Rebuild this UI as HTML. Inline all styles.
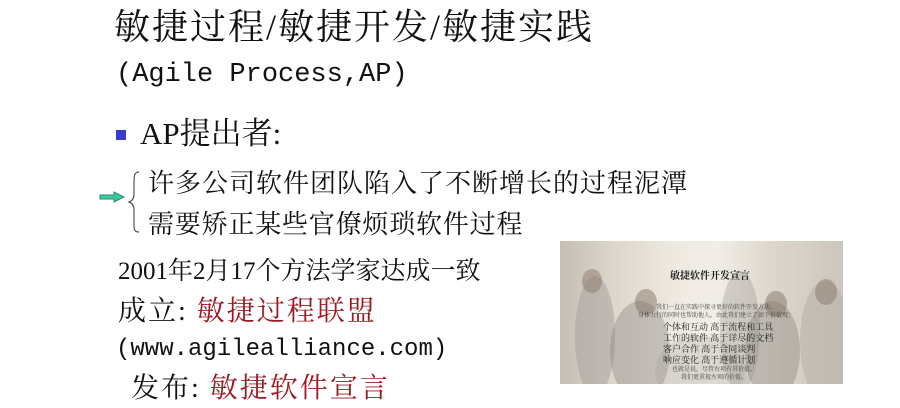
<!DOCTYPE html>
<html><head><meta charset="utf-8"><style>
body{margin:0;width:900px;height:408px;background:#fff;position:relative;overflow:hidden;font-family:"Liberation Serif","Noto Serif CJK SC",serif;color:#111}
.a{position:absolute;white-space:nowrap;line-height:1}
.r{color:#9b1b22}
.m{font-family:"Liberation Mono","Noto Serif CJK SC",monospace}
.b{position:absolute;border-radius:50%}
</style></head><body>
<div class="a" style="left:114px;top:9px;font-size:36px;letter-spacing:2px">敏捷过程/敏捷开发/敏捷实践</div>
<div class="a m" style="left:116px;top:62px;font-size:27px;">(Agile Process,AP)</div>
<div class="a" style="left:116px;top:130px;width:10px;height:10px;background:#3a3ad0"></div>
<div class="a" style="left:140px;top:118px;font-size:31px;">AP提出者:</div>
<svg class="a" style="left:98px;top:190px" width="30" height="14"><path d="M2 5h14V2l10 5-10 5V9H2z" fill="#3cc9a0" stroke="#2a8a6a" stroke-width="1"/></svg>
<svg class="a" style="left:128px;top:170px" width="14" height="64"><path d="M11 2C6 2 6 6 6 14v10c0 5-2 7-5 8 3 1 5 3 5 8v12c0 8 0 10 5 10" fill="none" stroke="#555" stroke-width="1.2"/></svg>
<div class="a" style="left:148px;top:171px;font-size:26px;letter-spacing:1px">许多公司软件团队陷入了不断增长的过程泥潭</div>
<div class="a" style="left:148px;top:212px;font-size:26px;letter-spacing:0.8px">需要矫正某些官僚烦琐软件过程</div>
<div class="a" style="left:118px;top:259px;font-size:25px;">2001年2月17个方法学家达成一致</div>
<div class="a" style="left:118px;top:298px;font-size:28px;letter-spacing:2px">成立: <span class="r">敏捷过程联盟</span></div>
<div class="a m" style="left:116px;top:338px;font-size:24px;">(www.agilealliance.com)</div>
<div class="a" style="left:131px;top:375px;font-size:28px;letter-spacing:2px">发布: <span class="r">敏捷软件宣言</span></div>
<div class="a" style="left:560px;top:241px;width:283px;height:143px;background:linear-gradient(90deg,#c4beb4 0%,#ddd7cd 20%,#eee9e0 40%,#f2eee7 55%,#dcd6cc 75%,#cdc6bc 100%);overflow:hidden">
<div class="b" style="left:15px;top:35px;width:40px;height:120px;background:#a09a96;opacity:.45"></div>
<div class="b" style="left:22px;top:28px;width:20px;height:24px;background:#8a7a6a;opacity:.5"></div>
<div class="b" style="left:50px;top:60px;width:60px;height:100px;background:#8a8582;opacity:.4"></div>
<div class="b" style="left:75px;top:48px;width:22px;height:26px;background:#7a6a5a;opacity:.45"></div>
<div class="b" style="left:160px;top:30px;width:40px;height:120px;background:#8d8884;opacity:.3"></div>
<div class="b" style="left:185px;top:60px;width:55px;height:100px;background:#87827e;opacity:.4"></div>
<div class="b" style="left:205px;top:50px;width:22px;height:26px;background:#7a6a5a;opacity:.45"></div>
<div class="b" style="left:240px;top:40px;width:50px;height:120px;background:#b0aaa4;opacity:.45"></div>
<div class="b" style="left:255px;top:38px;width:22px;height:26px;background:#7a6a5a;opacity:.4"></div>
<div class="b" style="left:95px;top:95px;width:90px;height:70px;background:#9c9894;opacity:.25"></div>
<div class="a" style="left:110px;top:29px;font-size:10px;color:#222;font-weight:bold;font-family:'Noto Serif CJK SC',serif">敏捷软件开发宣言</div>
<div class="a" style="left:78px;top:62px;font-size:6px;color:#444;font-family:'Noto Serif CJK SC',serif;line-height:8px;text-align:center">我们一直在实践中探寻更好的软件开发方法，<br>身体力行的同时也帮助他人。由此我们建立了如下价值观：</div>
<div class="a" style="left:103px;top:80px;font-size:9px;color:#222;font-family:'Noto Serif CJK SC',serif;line-height:11px">个体和互动 高于流程和工具<br>工作的软件 高于详尽的文档<br>客户合作 高于合同谈判<br>响应变化 高于遵循计划</div>
<div class="a" style="left:112px;top:124px;font-size:6px;color:#444;font-family:'Noto Serif CJK SC',serif;line-height:8px;text-align:center">也就是说，尽管右项有其价值，<br>我们更重视左项的价值。</div>
</div>
</body></html>
